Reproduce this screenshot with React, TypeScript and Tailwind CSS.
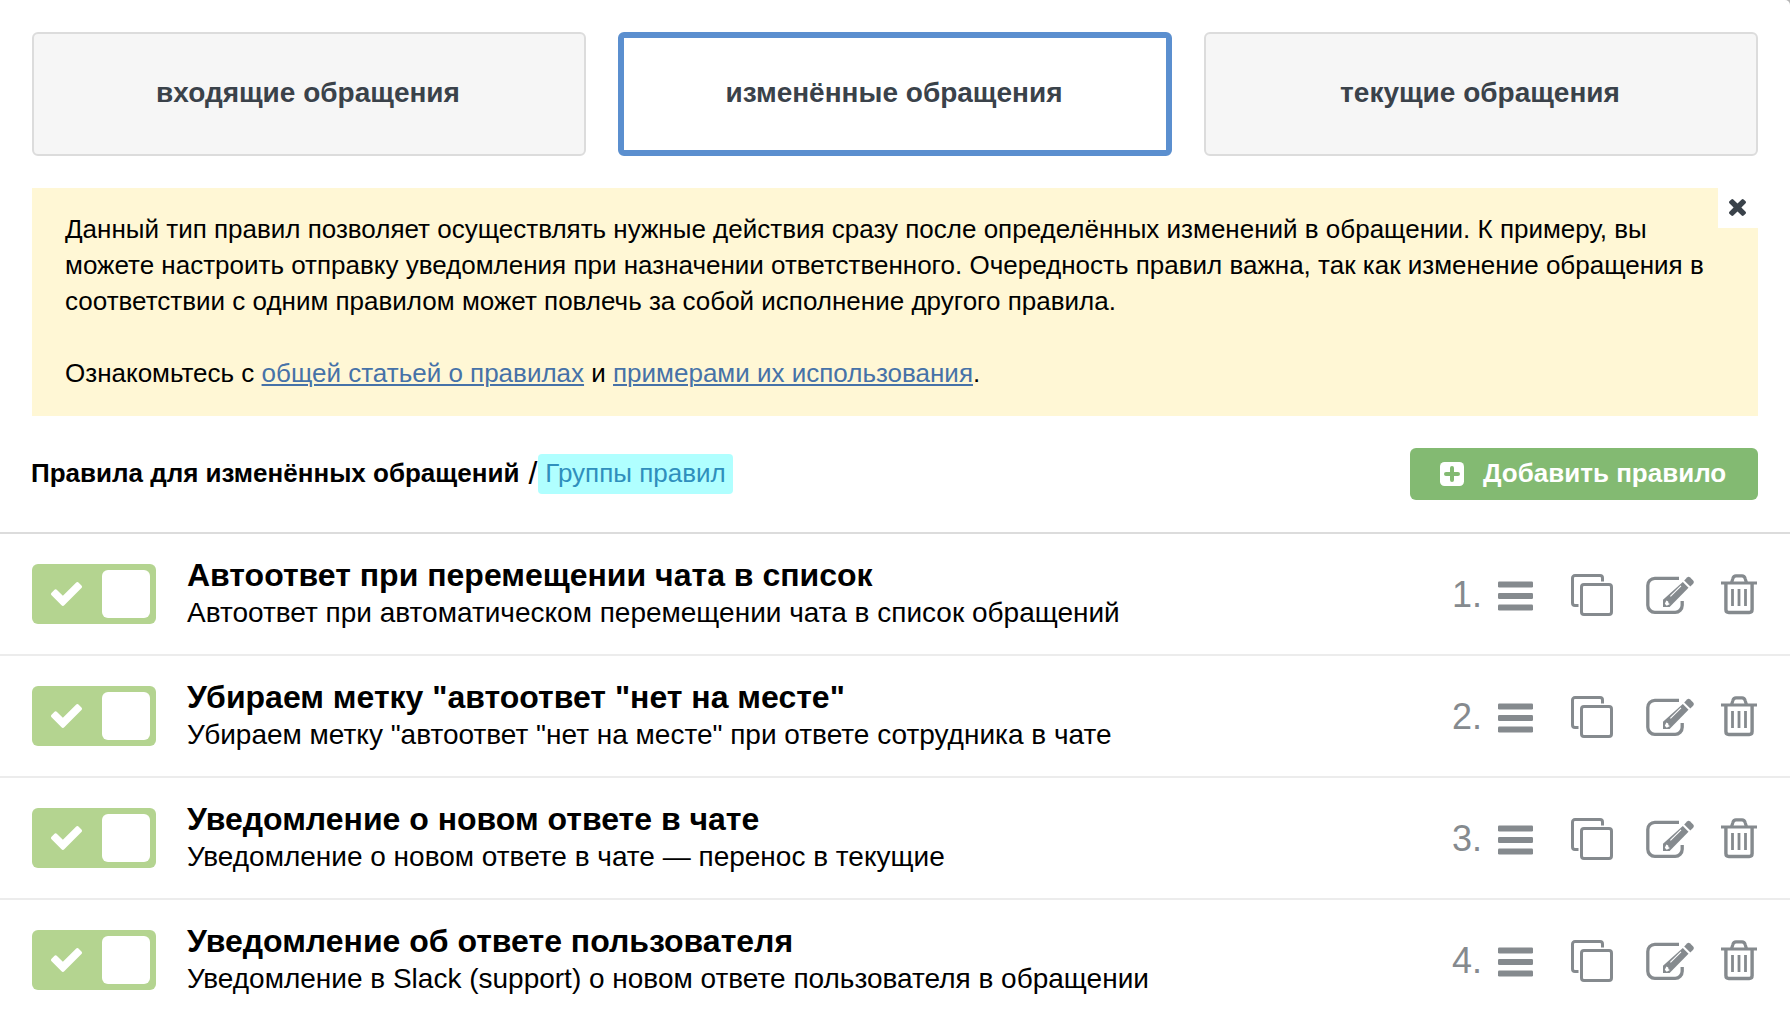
import React, { useState } from 'react';

interface Rule {
  id: number;
  title: string;
  description: string;
  enabled: boolean;
}

const TABS = [
  { id: 'incoming', label: 'входящие обращения' },
  { id: 'changed', label: 'изменённые обращения' },
  { id: 'current', label: 'текущие обращения' },
];

const INITIAL_RULES: Rule[] = [
  {
    id: 1,
    title: 'Автоответ при перемещении чата в список',
    description: 'Автоответ при автоматическом перемещении чата в список обращений',
    enabled: true,
  },
  {
    id: 2,
    title: 'Убираем метку "автоответ "нет на месте"',
    description: 'Убираем метку "автоответ "нет на месте" при ответе сотрудника в чате',
    enabled: true,
  },
  {
    id: 3,
    title: 'Уведомление о новом ответе в чате',
    description: 'Уведомление о новом ответе в чате — перенос в текущие',
    enabled: true,
  },
  {
    id: 4,
    title: 'Уведомление об ответе пользователя',
    description: 'Уведомление в Slack (support) о новом ответе пользователя в обращении',
    enabled: true,
  },
];

const CloseIcon = () => (
  <svg width="17" height="17" viewBox="302 366 1188 1188" fill="currentColor">
    <path d="M1490 1322q0 40-28 68l-136 136q-28 28-68 28t-68-28l-294-294-294 294q-28 28-68 28t-68-28l-136-136q-28-28-28-68t28-68l294-294-294-294q-28-28-28-68t28-68l136-136q28-28 68-28t68 28l294 294 294-294q28-28 68-28t68 28l136 136q28 28 28 68t-28 68l-294 294 294 294q28 28 28 68z" />
  </svg>
);

const CheckIcon = () => (
  <svg width="31" height="24" viewBox="121 334 1550 1188" fill="currentColor">
    <path d="M1671 566q0 40-28 68l-724 724-136 136q-28 28-68 28t-68-28l-136-136-362-362q-28-28-28-68t28-68l136-136q28-28 68-28t68 28l294 295 656-657q28-28 68-28t68 28l136 136q28 28 28 68z" />
  </svg>
);

const PlusSquareIcon = () => (
  <svg width="24" height="24" viewBox="0 0 24 24">
    <rect width="24" height="24" rx="4.5" fill="currentColor" />
    <path d="M12 6v12M6 12h12" stroke="#83ba72" strokeWidth="4" strokeLinecap="round" />
  </svg>
);

const BarsIcon = () => (
  <svg width="35" height="30" viewBox="0 0 35 30" fill="currentColor">
    <rect y="0.4" width="35" height="6" rx="1.2" />
    <rect y="12" width="35" height="6" rx="1.2" />
    <rect y="23.5" width="35" height="6" rx="1.2" />
  </svg>
);

const CopyIcon = () => (
  <svg width="42" height="42" viewBox="0 0 42 42" fill="none" stroke="currentColor" strokeWidth="3">
    <rect x="10.5" y="10.5" width="30" height="30" rx="2.5" />
    <path d="M31.5 7.5V4a2.5 2.5 0 0 0-2.5-2.5H4A2.5 2.5 0 0 0 1.5 4v25A2.5 2.5 0 0 0 4 31.5h3.5" />
  </svg>
);

const EditIcon = () => (
  <svg width="49" height="38" viewBox="0 0 49 38">
    <path
      d="M33 2.4H8.8a7 7 0 0 0-7 7v19.9a7 7 0 0 0 7 7h20.4a7 7 0 0 0 7-7V25"
      fill="none"
      stroke="currentColor"
      strokeWidth="3.3"
    />
    <path d="M36.8 6l5.7 5.7L23.6 31H17v-7.3z" fill="currentColor" />
    <path d="M38.2 4.4l2.8-2.8q1.6-1.5 3.2 0l3 3q1.5 1.6 0 3.2l-2.9 2.8z" fill="currentColor" />
    <path d="M20.4 24.6l-1.6 3.2 1.9 1.9 3.3-1.6-1.5-.8-.3-1.7z" fill="#fff" />
    <path d="M24.4 20.3L35 9.9" stroke="#fff" strokeWidth="1.1" />
  </svg>
);

const TrashIcon = () => (
  <svg width="36" height="41" viewBox="0 0 36 41" fill="none" stroke="currentColor">
    <path d="M0 9h36" strokeWidth="3" />
    <path d="M10.5 9l1.3-4.4q.7-2.7 3.2-2.7h6q2.5 0 3.2 2.7L25.5 9" strokeWidth="3.2" />
    <path d="M4.9 9v26.6q0 2.9 2.9 2.9h20.4q2.9 0 2.9-2.9V9" strokeWidth="3.4" />
    <path d="M11.5 15v17M18 15v17M24.5 15v17" strokeWidth="2.8" />
  </svg>
);

interface ToggleProps {
  enabled: boolean;
  onChange: () => void;
}

const Toggle: React.FC<ToggleProps> = ({ enabled, onChange }) => (
  <button
    type="button"
    onClick={onChange}
    className={`flex h-[60px] w-[124px] shrink-0 items-center justify-between rounded-md pr-1.5 pl-[19px] text-white ${
      enabled ? 'bg-[#b4d490]' : 'flex-row-reverse bg-gray-300'
    }`}
  >
    <CheckIcon />
    <span className="h-12 w-12 rounded-md bg-white" />
  </button>
);

const App: React.FC = () => {
  const [activeTab, setActiveTab] = useState('changed');
  const [showInfo, setShowInfo] = useState(true);
  const [rules, setRules] = useState<Rule[]>(INITIAL_RULES);

  const toggleRule = (id: number) => {
    setRules((prev) => prev.map((r) => (r.id === id ? { ...r, enabled: !r.enabled } : r)));
  };

  return (
    <div className="h-screen overflow-hidden bg-[#b5b5b5] font-['Liberation_Sans',Arial,sans-serif] text-[26px] leading-9 text-black">
      <div className="h-full overflow-hidden rounded-tr-[5px] bg-white">
        {/* Rule type tabs */}
        <nav className="grid grid-cols-3 gap-8 px-8 pt-8">
          {TABS.map((tab) => (
            <button
              key={tab.id}
              type="button"
              onClick={() => setActiveTab(tab.id)}
              className={`flex h-[124px] items-center justify-center rounded-md pr-0.5 pb-0.5 text-[28px] font-bold text-[#3a424a] ${
                activeTab === tab.id ? 'border-6 border-[#5b8fcf] bg-white' : 'border-2 border-[#dcdcdc] bg-[#f6f6f6]'
              }`}
            >
              <span>{tab.label}</span>
            </button>
          ))}
        </nav>

        {/* Info notice */}
        {showInfo && (
          <section className="relative mx-8 mt-8 bg-[#fff7d5] px-[33px] pt-[23px] pb-[25px] whitespace-nowrap">
            <button
              type="button"
              onClick={() => setShowInfo(false)}
              className="absolute top-0 right-0 flex h-10 w-10 items-center justify-center bg-white pr-0.5 pb-0.5 text-[#3a424a]"
            >
              <CloseIcon />
            </button>
            <p>
              <span>Данный тип правил позволяет осуществлять нужные действия сразу после определённых изменений в обращении. К примеру, вы</span>
              <br />
              <span>можете настроить отправку уведомления при назначении ответственного. Очередность правил важна, так как изменение обращения в</span>
              <br />
              <span>соответствии с одним правилом может повлечь за собой исполнение другого правила.</span>
            </p>
            <p className="mt-9">
              Ознакомьтесь с{' '}
              <a href="#" className="text-[#4672a8] underline decoration-2 underline-offset-2">общей статьей о правилах</a> и{' '}
              <a href="#" className="text-[#4672a8] underline decoration-2 underline-offset-2">примерами их использования</a>.
            </p>
          </section>
        )}

        {/* List header */}
        <header className="flex items-center justify-between border-b-2 border-[#dcdcdc] px-8 py-8">
          <div className="flex items-center whitespace-nowrap">
            <h1 className="-ml-px pb-0.5 font-bold">Правила для изменённых обращений</h1>
            <span className="ml-[9px] pb-0.5 text-[32px]">/</span>
            <a href="#" className="ml-px flex h-10 items-center rounded bg-[#b0ffff] pr-[7px] pb-0.5 pl-[7px] text-[#2f8fbd]">
              Группы правил
            </a>
          </div>
          <button
            type="button"
            className="flex h-[52px] w-[348px] items-center rounded-md bg-[#83ba72] pl-[30px] font-bold whitespace-nowrap text-white"
          >
            <PlusSquareIcon />
            <span className="ml-[19px] pb-0.5">Добавить правило</span>
          </button>
        </header>

        <ul>
          {rules.map((rule, index) => (
            <li key={rule.id} className="flex h-[122px] items-center border-b-2 border-[#ececec] px-8">
              <Toggle enabled={rule.enabled} onChange={() => toggleRule(rule.id)} />
              <div className="ml-[31px] pb-px whitespace-nowrap">
                <h2 className="mb-px text-[32px] leading-[38px] font-bold">{rule.title}</h2>
                <p className="text-[28px] leading-9">{rule.description}</p>
              </div>
              <div className="ml-auto flex items-center pr-px text-[#858a8e]">
                <span className="pt-0.5 text-[36px]">{index + 1}.</span>
                <button type="button" className="ml-[16px] pt-[3px]"><BarsIcon /></button>
                <button type="button" className="ml-[38px] pt-0.5"><CopyIcon /></button>
                <button type="button" className="ml-[33px] pt-0.5"><EditIcon /></button>
                <button type="button" className="ml-[26px]"><TrashIcon /></button>
              </div>
            </li>
          ))}
        </ul>
      </div>
    </div>
  );
};

export default App;
